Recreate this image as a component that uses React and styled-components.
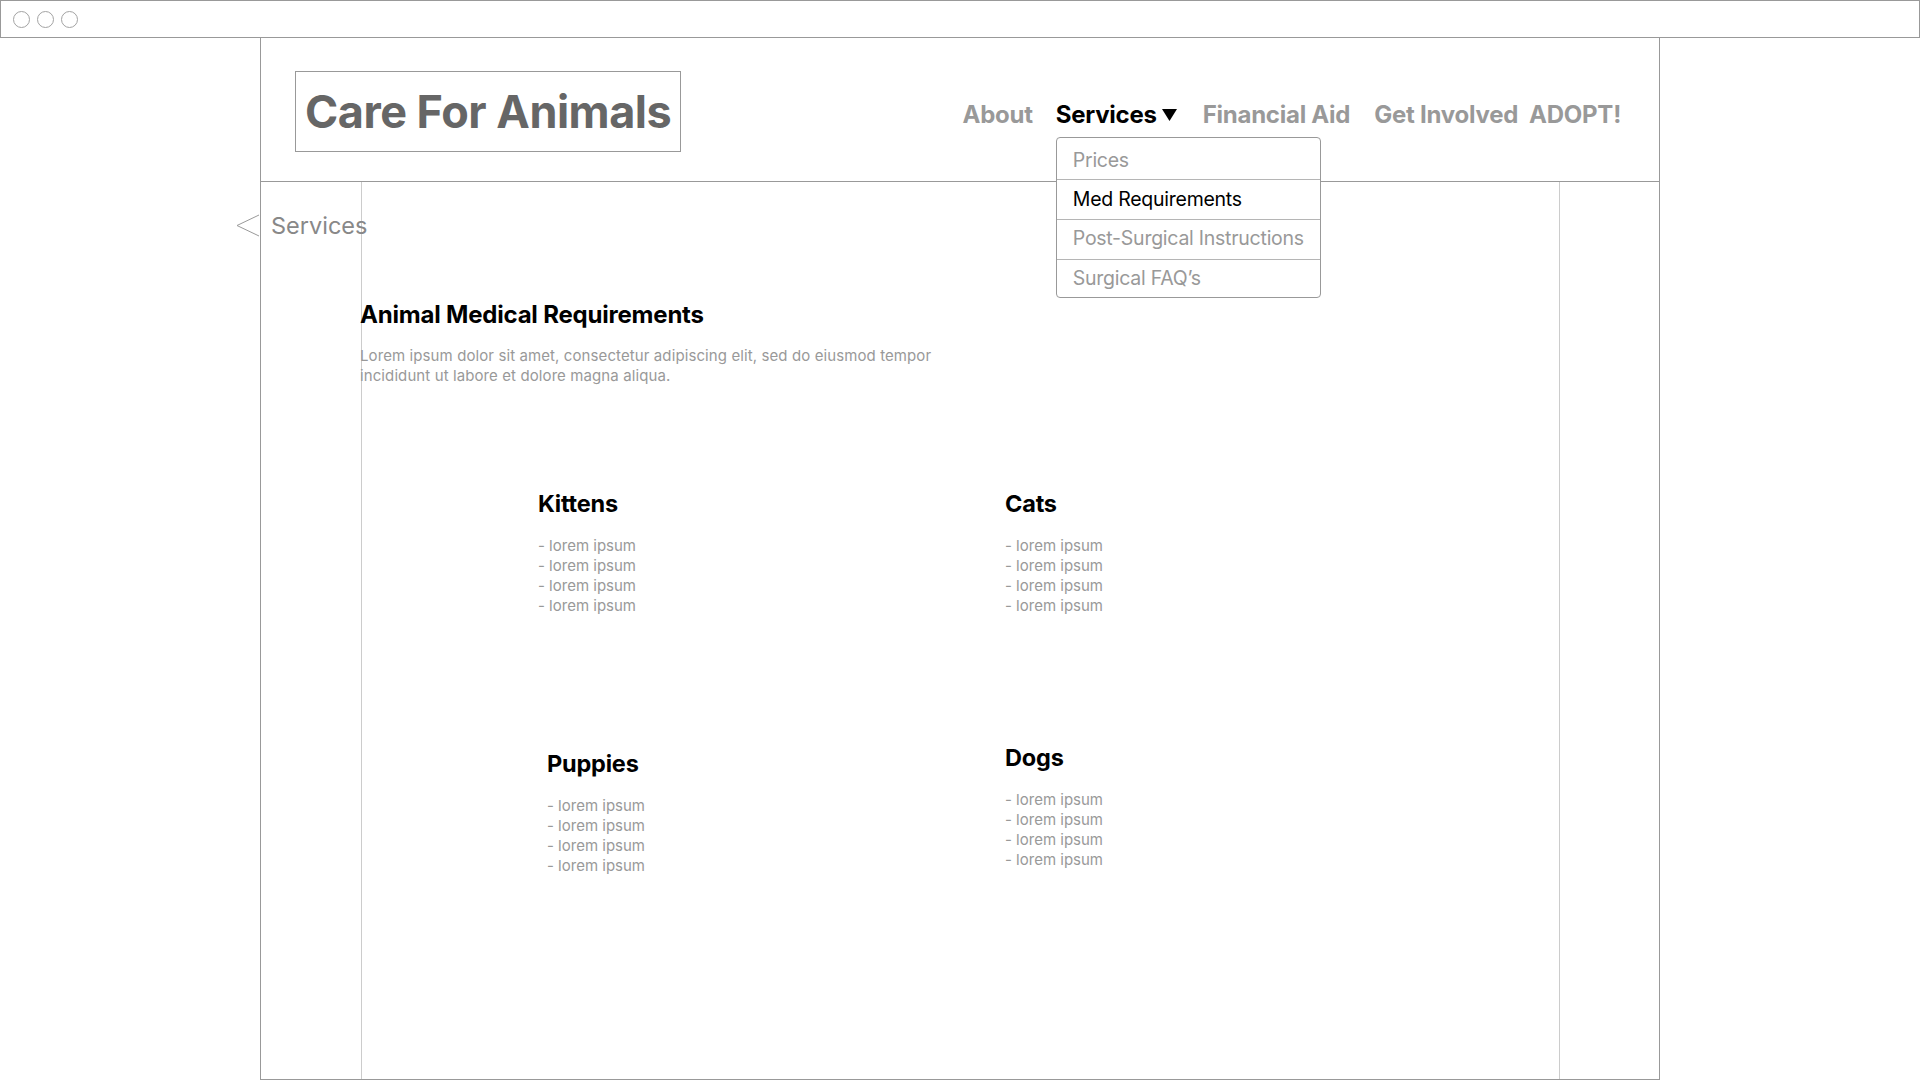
import React from "react";
import styled, { createGlobalStyle } from "styled-components";

const Global = createGlobalStyle`
  html, body { margin: 0; padding: 0; background: #fff; }
  body { font-family: Inter, "Noto Sans", sans-serif; color: #000; }
  * { box-sizing: border-box; }
`;

const Page = styled.div`
  width: 1920px;
  height: 1080px;
  overflow: hidden;
  background: #fff;
`;

const BrowserBar = styled.div`
  height: 38px;
  border: 1px solid #999;
  display: flex;
  align-items: center;
  gap: 7px;
  padding-left: 12px;
`;

const Dot = styled.span`
  width: 17px;
  height: 17px;
  border: 1px solid #a3a3a3;
  border-radius: 50%;
`;

const Frame = styled.div`
  margin-left: 260px;
  width: 1400px;
  height: 1042px;
  border: 1px solid #999;
  border-top: none;
  display: flex;
  flex-direction: column;
`;

const Header = styled.header`
  height: 144px;
  flex: none;
  border-bottom: 1px solid #999;
  display: flex;
  justify-content: space-between;
  align-items: flex-start;
  padding: 0 38px 0 34px;
  position: relative;
  z-index: 2;
`;

const Logo = styled.div`
  margin-top: 33px;
  height: 81px;
  border: 1px solid #999;
  padding: 0 9px 0;
  display: flex;
  align-items: center;
  font-size: 45px;
  font-weight: 700;
  line-height: 1;
  color: #666;
  letter-spacing: -0.5px;
`;

const Nav = styled.nav`
  margin-top: 62px;
  display: flex;
  align-items: flex-start;
`;

const NavItem = styled.div`
  position: relative;
  margin-left: ${(p) => p.$lead}px;
  display: flex;
  align-items: center;
  gap: 5px;
  font-size: 24px;
  font-weight: 700;
  line-height: 29px;
  letter-spacing: -0.25px;
  color: ${(p) => (p.$active ? "#000" : "#999")};
  white-space: nowrap;

  svg {
    flex: none;
  }
`;

const Dropdown = styled.div`
  position: absolute;
  left: 0;
  top: 37px;
  width: 265px;
  background: #fff;
  border: 1px solid #999;
  border-radius: 4px;
  overflow: hidden;
  z-index: 10;
`;

const DropRow = styled.div`
  height: ${(p) => p.$h}px;
  display: flex;
  align-items: center;
  padding: ${(p) => (p.$shift > 0 ? p.$shift : 0)}px 0 ${(p) => (p.$shift < 0 ? -p.$shift : 0)}px 16px;
  font-size: 19.5px;
  font-weight: 400;
  color: ${(p) => (p.$active ? "#000" : "#999")};
  & + & {
    border-top: 1px solid #b5b5b5;
  }
`;

const Body = styled.div`
  flex: 1;
  display: flex;
  min-height: 0;
`;

const LeftCol = styled.div`
  width: 101px;
  flex: none;
  border-right: 1px solid #ccc;
  padding-top: 29px;
`;

const RightCol = styled.div`
  width: 100px;
  flex: none;
  border-left: 1px solid #ccc;
`;

const Crumb = styled.div`
  margin-left: -25px;
  display: flex;
  align-items: center;
  gap: 11px;
  font-size: 23.5px;
  line-height: 29px;
  color: #888;
  white-space: nowrap;
  position: relative;
  z-index: 1;

  svg {
    flex: none;
  }
`;

const Main = styled.main`
  flex: 1;
  padding-top: 119px;
`;

const Intro = styled.div`
  margin-left: -2px;
`;

const Title = styled.h1`
  margin: 0;
  font-size: 24px;
  line-height: 28px;
  font-weight: 700;
  letter-spacing: -0.2px;
  color: #000;
`;

const Lead = styled.p`
  margin: 17px 0 0;
  width: 610px;
  font-size: 15px;
  line-height: 20px;
  letter-spacing: 0.1px;
  color: #999;
`;

const Grid = styled.div`
  margin-top: 104px;
  padding-left: 176px;
  display: grid;
  grid-template-columns: 467px auto;
  row-gap: 128px;
`;

const Card = styled.section`
  margin-left: ${(p) => p.$dx || 0}px;
  margin-top: ${(p) => p.$dy || 0}px;
`;

const CardTitle = styled.h2`
  margin: 0;
  font-size: 23.5px;
  line-height: 28px;
  font-weight: 700;
  letter-spacing: -0.2px;
  color: #000;
`;

const List = styled.ul`
  margin: 18px 0 0;
  padding: 0;
  list-style: none;
  font-size: 15px;
  line-height: 20px;
  color: #999;
`;

const Caret = () => (
  <svg width="15" height="12" viewBox="0 0 15 12">
    <polygon points="0,0 15,0 7.5,12" fill="#000" />
  </svg>
);

const Chevron = () => (
  <svg width="24" height="23" viewBox="0 0 24 23">
    <polyline points="23,1 1,11.5 23,22" fill="none" stroke="#9a9a9a" strokeWidth="1" />
  </svg>
);

const animals = [
  { name: "Kittens" },
  { name: "Cats" },
  { name: "Puppies", dx: 9, dy: 6 },
  { name: "Dogs" },
];

const navItems = [
  { label: "About", lead: 0 },
  { label: "Services", lead: 23 },
  { label: "Financial Aid", lead: 26 },
  { label: "Get Involved", lead: 24 },
  { label: "ADOPT!", lead: 11 },
];

const menu = [
  { label: "Prices", h: 41, shift: 4 },
  { label: "Med Requirements", h: 40, shift: 0, active: true },
  { label: "Post-Surgical Instructions", h: 40, shift: -3 },
  { label: "Surgical FAQ’s", h: 38, shift: 0 },
];

export default function App() {
  return (
    <Page>
      <Global />
      <BrowserBar>
        <Dot />
        <Dot />
        <Dot />
      </BrowserBar>
      <Frame>
        <Header>
          <Logo>Care For Animals</Logo>
          <Nav>
            {navItems.map((n) => {
              const active = n.label === "Services";
              return (
                <NavItem key={n.label} $lead={n.lead} $active={active}>
                  {n.label}
                  {active && <Caret />}
                  {active && (
                    <Dropdown>
                      {menu.map((m) => (
                        <DropRow key={m.label} $h={m.h} $shift={m.shift} $active={m.active}>
                          {m.label}
                        </DropRow>
                      ))}
                    </Dropdown>
                  )}
                </NavItem>
              );
            })}
          </Nav>
        </Header>
        <Body>
          <LeftCol>
            <Crumb>
              <Chevron />
              Services
            </Crumb>
          </LeftCol>
          <Main>
            <Intro>
              <Title>Animal Medical Requirements</Title>
              <Lead>
                Lorem ipsum dolor sit amet, consectetur adipiscing elit, sed do eiusmod tempor incididunt ut labore et dolore magna aliqua.
              </Lead>
            </Intro>
            <Grid>
              {animals.map((a) => (
                <Card key={a.name} $dx={a.dx} $dy={a.dy}>
                  <CardTitle>{a.name}</CardTitle>
                  <List>
                    <li>- lorem ipsum</li>
                    <li>- lorem ipsum</li>
                    <li>- lorem ipsum</li>
                    <li>- lorem ipsum</li>
                  </List>
                </Card>
              ))}
            </Grid>
          </Main>
          <RightCol />
        </Body>
      </Frame>
    </Page>
  );
}
